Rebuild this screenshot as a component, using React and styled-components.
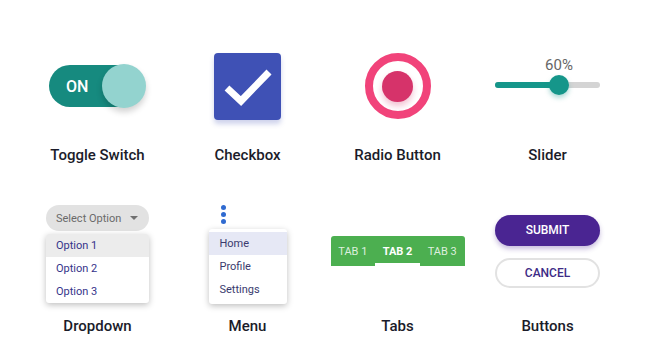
import styled, { createGlobalStyle } from 'styled-components';

const GlobalStyle = createGlobalStyle`
  body {
    margin: 0;
    background: #ffffff;
    font-family: Roboto, "Liberation Sans", sans-serif;
  }
`;

const Page = styled.div`
  width: 645px;
  height: 360px;
  padding-top: 40px;
  box-sizing: border-box;
  display: grid;
  grid-template-columns: repeat(4, 150px);
  justify-content: center;
  align-content: start;
  row-gap: 31px;
`;

const Cell = styled.div`
  display: flex;
  flex-direction: column;
  align-items: center;
`;

const Preview = styled.div`
  height: ${p => p.$h}px;
  width: 100%;
  display: flex;
  justify-content: center;
  align-items: ${p => p.$align || 'center'};
  padding-top: ${p => p.$pt || 0}px;
  box-sizing: border-box;
`;

const Label = styled.div`
  margin-top: ${p => p.$mt}px;
  font-size: 15px;
  line-height: 20px;
  font-weight: 500;
  color: #1b1c2a;
`;

/* toggle */
const Toggle = styled.div`
  position: relative;
  width: 97px;
  height: 44px;
  display: flex;
  align-items: center;
`;
const Track = styled.div`
  width: 90px;
  height: 42px;
  border-radius: 21px;
  background: #168a7f;
  color: #fff;
  font-size: 16px;
  font-weight: 500;
  display: flex;
  align-items: center;
  padding-left: 17px;
  box-sizing: border-box;
`;
const Knob = styled.div`
  position: absolute;
  left: 53px;
  top: 0;
  width: 44px;
  height: 44px;
  border-radius: 50%;
  background: #93d3cf;
  box-shadow: 0 4px 6px rgba(0, 0, 0, 0.18);
`;

/* checkbox */
const CheckBox = styled.div`
  width: 67px;
  height: 67px;
  border-radius: 4px;
  background: #3f51b5;
  box-shadow: 0 4px 5px rgba(63, 81, 181, 0.25);
  display: flex;
`;

/* radio */
const RadioRing = styled.div`
  width: 66px;
  height: 66px;
  border-radius: 50%;
  border: 8px solid #f1437a;
  box-sizing: border-box;
  display: flex;
  align-items: center;
  justify-content: center;
`;
const RadioDot = styled.div`
  width: 31px;
  height: 31px;
  border-radius: 50%;
  background: #d6336a;
  box-shadow: 0 4px 6px rgba(214, 51, 106, 0.3);
`;

/* slider */
const Slider = styled.div`
  position: relative;
  width: 105px;
  padding-top: 26px;
`;
const SliderValue = styled.div`
  position: absolute;
  top: 0;
  left: 64px;
  transform: translateX(-50%);
  font-size: 15px;
  color: #666;
`;
const SliderTrack = styled.div`
  position: relative;
  height: 6px;
  border-radius: 3px;
  background: #d4d4d4;
`;
const SliderFill = styled.div`
  height: 100%;
  border-radius: 3px;
  background: #15968a;
`;
const Thumb = styled.div`
  position: absolute;
  top: 50%;
  width: 20px;
  height: 20px;
  border-radius: 50%;
  background: #15968a;
  transform: translate(-50%, -50%);
  box-shadow: 0 3px 5px rgba(21, 150, 138, 0.35);
`;

/* dropdown */
const Dropdown = styled.div`
  width: 103px;
  display: flex;
  flex-direction: column;
  gap: 3px;
`;
const SelectPill = styled.div`
  height: 26px;
  border-radius: 13px;
  background: #e2e2e2;
  color: #6a6a6a;
  font-size: 11px;
  display: flex;
  align-items: center;
  justify-content: space-between;
  padding: 0 11px 0 10px;
`;
const Caret = styled.span`
  width: 0;
  height: 0;
  border-left: 4px solid transparent;
  border-right: 4px solid transparent;
  border-top: 4px solid #707070;
`;
const Panel = styled.div`
  background: #fff;
  border-radius: 3px;
  box-shadow: 0 2px 6px rgba(0, 0, 0, 0.25);
  padding: ${p => p.$pad || 0}px 0;
  overflow: hidden;
`;
const Item = styled.div`
  height: 23px;
  display: flex;
  align-items: center;
  padding-left: ${p => p.$pl || 10}px;
  font-size: 11px;
  color: ${p => p.$color || '#35348a'};
  background: ${p => (p.$active ? p.$activeBg : 'transparent')};
`;

/* menu */
const Menu = styled.div`
  display: flex;
  flex-direction: column;
  align-items: flex-start;
  gap: 5px;
`;
const Dots = styled.div`
  display: flex;
  flex-direction: column;
  gap: 2px;
  margin-left: 12px;
`;
const Dot = styled.span`
  width: 5px;
  height: 5px;
  border-radius: 50%;
  background: #2f6ad0;
`;
const MenuPanel = styled(Panel)`
  width: 78px;
`;

/* tabs */
const TabBar = styled.div`
  display: flex;
  width: 134px;
  height: 30px;
  background: #4caf50;
  border-radius: 3px 3px 0 0;
`;
const Tab = styled.div`
  flex: 1;
  display: flex;
  align-items: center;
  justify-content: center;
  font-size: 11px;
  color: ${p => (p.$active ? '#fff' : 'rgba(255,255,255,0.82)')};
  font-weight: ${p => (p.$active ? 700 : 400)};
  border-bottom: 3px solid ${p => (p.$active ? '#fff' : 'transparent')};
  padding-top: 3px;
`;

/* buttons */
const Buttons = styled.div`
  display: flex;
  flex-direction: column;
  gap: 12px;
  width: 105px;
`;
const Button = styled.div`
  height: ${p => (p.$primary ? 31 : 30)}px;
  border-radius: 16px;
  box-sizing: border-box;
  display: flex;
  align-items: center;
  justify-content: center;
  font-size: 12px;
  font-weight: 500;
  background: ${p => (p.$primary ? '#4a2592' : '#fff')};
  color: ${p => (p.$primary ? '#fff' : '#3e2b86')};
  border: ${p => (p.$primary ? 'none' : '2px solid #e2e2e2')};
  box-shadow: ${p => (p.$primary ? '0 3px 5px rgba(74, 37, 146, 0.3)' : 'none')};
`;

export default function App() {
  return (
    <>
      <GlobalStyle />
      <Page>
        <Cell>
          <Preview $h={92}>
            <Toggle>
              <Track>ON</Track>
              <Knob />
            </Toggle>
          </Preview>
          <Label $mt={13}>Toggle Switch</Label>
        </Cell>

        <Cell>
          <Preview $h={92}>
            <CheckBox>
              <svg width="67" height="67" viewBox="0 0 67 67">
                <path d="M13 35 L27 48 L55 19" fill="none" stroke="#fff" strokeWidth="7" />
              </svg>
            </CheckBox>
          </Preview>
          <Label $mt={13}>Checkbox</Label>
        </Cell>

        <Cell>
          <Preview $h={92}>
            <RadioRing>
              <RadioDot />
            </RadioRing>
          </Preview>
          <Label $mt={13}>Radio Button</Label>
        </Cell>

        <Cell>
          <Preview $h={92} $align="flex-start" $pt={16}>
            <Slider>
              <SliderValue>60%</SliderValue>
              <SliderTrack>
                <SliderFill style={{ width: '61%' }} />
                <Thumb style={{ left: '61%' }} />
              </SliderTrack>
            </Slider>
          </Preview>
          <Label $mt={13}>Slider</Label>
        </Cell>

        <Cell>
          <Preview $h={110} $align="flex-start" $pt={9}>
            <Dropdown>
              <SelectPill>
                Select Option
                <Caret />
              </SelectPill>
              <Panel>
                <Item $active $activeBg="#ececec">Option 1</Item>
                <Item>Option 2</Item>
                <Item>Option 3</Item>
              </Panel>
            </Dropdown>
          </Preview>
          <Label $mt={10}>Dropdown</Label>
        </Cell>

        <Cell>
          <Preview $h={110} $align="flex-start" $pt={9}>
            <Menu>
              <Dots>
                <Dot />
                <Dot />
                <Dot />
              </Dots>
              <MenuPanel $pad={3}>
                <Item $active $activeBg="#e6e8f5" $pl={11} $color="#3a3a6e">Home</Item>
                <Item $pl={11} $color="#3a3a6e">Profile</Item>
                <Item $pl={11} $color="#3a3a6e">Settings</Item>
              </MenuPanel>
            </Menu>
          </Preview>
          <Label $mt={10}>Menu</Label>
        </Cell>

        <Cell>
          <Preview $h={110}>
            <TabBar>
              <Tab>TAB 1</Tab>
              <Tab $active>TAB 2</Tab>
              <Tab>TAB 3</Tab>
            </TabBar>
          </Preview>
          <Label $mt={10}>Tabs</Label>
        </Cell>

        <Cell>
          <Preview $h={110}>
            <Buttons>
              <Button $primary>SUBMIT</Button>
              <Button>CANCEL</Button>
            </Buttons>
          </Preview>
          <Label $mt={10}>Buttons</Label>
        </Cell>
      </Page>
    </>
  );
}
